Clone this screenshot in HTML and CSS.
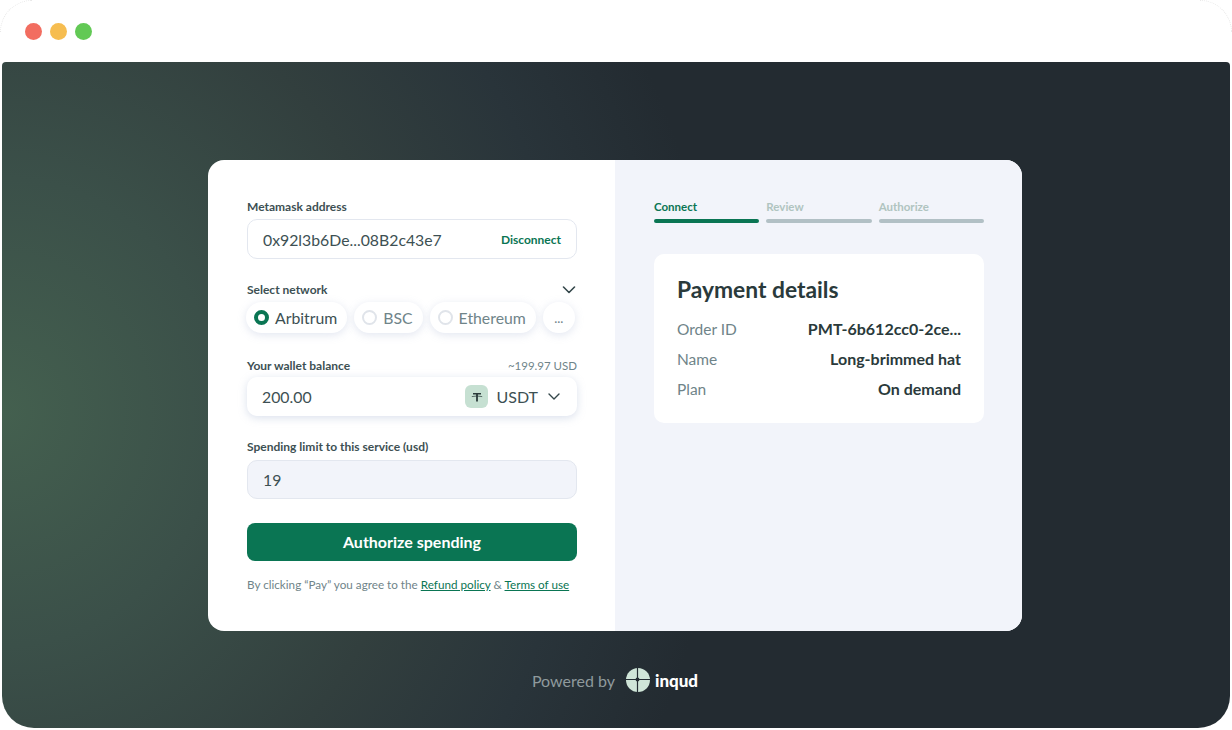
FILE: index.html
```html
<!DOCTYPE html>
<html lang="en">
<head>
    <meta charset="UTF-8">
    <title>Authorize spending</title>
    <link rel="stylesheet" href="styles.css">
</head>
<body>

<div class="titleBar">
    <span class="corner cornerLeft"></span>
    <span class="corner cornerRight"></span>
    <span class="dot dotRed"></span>
    <span class="dot dotYellow"></span>
    <span class="dot dotGreen"></span>
</div>

<div class="stage">
    <div class="card">
        <div class="formSide">
            <div class="fieldLabel">Metamask address</div>
            <div class="inputBox addressBox">
                <span class="inputText">0x92l3b6De...08B2c43e7</span>
                <span class="disconnect">Disconnect</span>
            </div>

            <div class="fieldLabel networkLabel">
                <span>Select network</span>
                <svg class="chevron" width="14" height="8" viewBox="0 0 14 8"><path d="M1.5 1 L7 6.5 L12.5 1" fill="none" stroke="#34474a" stroke-width="1.6" stroke-linecap="round" stroke-linejoin="round"/></svg>
            </div>
            <div class="networks">
                <div class="chip chipActive"><span class="radio radioOn"></span>Arbitrum</div>
                <div class="chip"><span class="radio"></span>BSC</div>
                <div class="chip"><span class="radio"></span>Ethereum</div>
                <div class="chip chipMore">...</div>
            </div>

            <div class="fieldLabel balanceLabel">
                <span>Your wallet balance</span>
                <span class="usdHint">~199.97 USD</span>
            </div>
            <div class="inputBox balanceBox">
                <span class="inputText">200.00</span>
                <div class="tokenPick">
                    <span class="tokenIcon">
                        <svg width="12" height="12" viewBox="0 0 12 12"><path d="M2 2 H10 V3.6 H6.9 V10.5 H5.1 V3.6 H2 Z" fill="#2a3a3a"/><path d="M0.8 5.6 Q6 4.4 11.2 5.6" fill="none" stroke="#2a3a3a" stroke-width="0.7"/></svg>
                    </span>
                    <span class="tokenName">USDT</span>
                    <svg width="12" height="7" viewBox="0 0 12 7"><path d="M1 1 L6 6 L11 1" fill="none" stroke="#34474a" stroke-width="1.4" stroke-linecap="round" stroke-linejoin="round"/></svg>
                </div>
            </div>

            <div class="fieldLabel limitLabel">Spending limit to this service (usd)</div>
            <div class="inputBox limitBox">
                <span class="inputText">19</span>
            </div>

            <button class="payBtn">Authorize spending</button>

            <p class="terms">By clicking “Pay” you agree to the <a href="#">Refund policy</a> &amp; <a href="#">Terms of use</a></p>
        </div>

        <div class="infoSide">
            <div class="steps">
                <div class="step stepActive"><span>Connect</span><i></i></div>
                <div class="step"><span>Review</span><i></i></div>
                <div class="step"><span>Authorize</span><i></i></div>
            </div>
            <div class="details">
                <h2>Payment details</h2>
                <div class="detailRow"><span>Order ID</span><strong>PMT-6b612cc0-2ce...</strong></div>
                <div class="detailRow"><span>Name</span><strong>Long-brimmed hat</strong></div>
                <div class="detailRow"><span>Plan</span><strong>On demand</strong></div>
            </div>
        </div>
    </div>

    <div class="poweredBy">
        <span>Powered by</span>
        <svg width="24" height="24" viewBox="0 0 24 24">
            <circle cx="12" cy="12" r="12" fill="#cfe5d8"/>
            <path d="M11.5 0 V24 M0 11.5 H24" stroke="#232c32" stroke-width="1.2"/>
            <circle cx="11.5" cy="11.5" r="2" fill="#232c32"/>
        </svg>
        <span class="brand">inqud</span>
    </div>
</div>

</body>
</html>
```

FILE: styles.css
```css
* {
    box-sizing: border-box;
}
body {
    font-family: "Lato", "Noto Sans", sans-serif;
    background-color: #fff;
    color: #2a3a3b;
    margin: 0;
    width: 1232px;
    height: 730px;
    overflow: hidden;
    position: relative;
}
.titleBar {
    height: 62px;
    display: flex;
    align-items: center;
    gap: 8px;
    padding: 0 0 0 25px;
}
.corner {
    position: absolute;
    top: 0;
    width: 32px;
    height: 32px;
    border-top: 1px dotted #e8e8e8;
}
.cornerLeft {
    left: 0;
    border-left: 1px dotted #e8e8e8;
    border-top-left-radius: 32px;
}
.cornerRight {
    right: 0;
    border-right: 1px dotted #e8e8e8;
    border-top-right-radius: 32px;
}
.dot {
    width: 17px;
    height: 17px;
    border-radius: 50%;
}
.dotRed { background-color: #f26d60; }
.dotYellow { background-color: #f6bd50; }
.dotGreen { background-color: #62c955; }

.stage {
    margin: 0 2px;
    height: 666px;
    padding: 98px 2px 0 0;
    border-radius: 4px 4px 32px 32px;
    background-color: #232b31;
    background-image: radial-gradient(ellipse 720px 780px at 0px 350px, #44604f 0%, #3b5049 30%, #323f3e 58%, #29343a 80%, #232b31 100%);
    display: flex;
    flex-direction: column;
    align-items: center;
}
.card {
    width: 814px;
    height: 471px;
    display: flex;
    border-radius: 16px;
    overflow: hidden;
    background-color: #fff;
}
.formSide {
    width: 407px;
    padding: 40px 38px 0 39px;
}
.infoSide {
    width: 407px;
    padding: 40px 38px 0 39px;
    background-color: #f2f4fa;
}
.fieldLabel {
    font-size: 12px;
    font-weight: 700;
    line-height: 14px;
    color: #3d5053;
    display: flex;
    justify-content: space-between;
    align-items: center;
}
.inputBox {
    height: 40px;
    margin-top: 5px;
    padding: 0 15px;
    border-radius: 10px;
    display: flex;
    align-items: center;
    justify-content: space-between;
    background-color: #fff;
}
.inputText {
    font-size: 15.8px;
    color: #3d5053;
}
.addressBox {
    border: 1px solid #e3e7ef;
}
.disconnect {
    font-size: 12px;
    font-weight: 700;
    color: #0a7553;
}
.networkLabel {
    margin-top: 24px;
}
.chevron {
    margin-right: 1px;
}
.networks {
    display: flex;
    gap: 7px;
    margin: 5px 0 0 -1px;
}
.chip {
    height: 31px;
    padding: 0 10px 0 8px;
    border-radius: 16px;
    background-color: #fff;
    box-shadow: 0 2px 8px rgba(150, 165, 200, 0.28);
    display: flex;
    align-items: center;
    gap: 6px;
    font-size: 15.8px;
    color: #6f8489;
}
.chipActive {
    color: #3d5053;
}
.chipMore {
    width: 32px;
    padding: 0;
    justify-content: center;
    font-size: 13px;
}
.radio {
    width: 15px;
    height: 15px;
    border-radius: 50%;
    border: 2px solid #e0e4ea;
}
.radioOn {
    border: 4px solid #0a7553;
    background-color: #fff;
}
.balanceLabel {
    margin-top: 26px;
}
.usdHint {
    font-weight: 400;
    font-size: 11.5px;
    color: #6f8489;
}
.balanceBox {
    height: 39px;
    margin-top: 4px;
    box-shadow: 0 2px 8px rgba(150, 165, 200, 0.35);
    padding-right: 17px;
}
.tokenPick {
    display: flex;
    align-items: center;
}
.tokenIcon {
    width: 23px;
    height: 23px;
    border-radius: 6px;
    background-color: #c6e0d2;
    display: flex;
    align-items: center;
    justify-content: center;
    margin-right: 8px;
}
.tokenName {
    font-size: 16px;
    color: #3d5053;
    margin-right: 10px;
}
.limitLabel {
    margin-top: 24px;
}
.limitBox {
    height: 39px;
    margin-top: 6px;
    background-color: #f2f4fa;
    border: 1px solid #e3e7ef;
}
.payBtn {
    display: block;
    width: 100%;
    height: 38px;
    margin-top: 24px;
    padding: 0 0 2px;
    border: none;
    border-radius: 8px;
    background-color: #0a7553;
    color: #fff;
    font-family: inherit;
    font-size: 16px;
    font-weight: 700;
}
.terms {
    margin: 16px 0 0;
    font-size: 11.7px;
    line-height: 15px;
    color: #6f8489;
}
.terms a {
    color: #0a7553;
    text-decoration: underline;
}
.steps {
    display: flex;
    gap: 7px;
}
.step {
    flex: 1;
    font-size: 11.5px;
    font-weight: 700;
    line-height: 14px;
    color: #b0c4c0;
}
.step i {
    display: block;
    height: 4px;
    margin-top: 5px;
    border-radius: 2px;
    background-color: #b2c0c5;
}
.stepActive {
    color: #0a7553;
}
.stepActive i {
    background-color: #0a7553;
}
.details {
    margin-top: 31px;
    height: 169px;
    padding: 21px 23px;
    border-radius: 10px;
    background-color: #fff;
}
.details h2 {
    margin: 0 0 10px;
    font-size: 22.8px;
    line-height: 28px;
    font-weight: 700;
    color: #2a3a3b;
}
.detailRow {
    display: flex;
    justify-content: space-between;
    align-items: center;
    height: 30px;
    font-size: 15.5px;
}
.detailRow span {
    color: #6f8489;
    padding-top: 1px;
}
.detailRow strong {
    color: #2a3a3b;
    font-size: 16px;
    font-weight: 700;
}
.poweredBy {
    display: flex;
    align-items: center;
    margin-top: 37px;
    font-size: 16px;
    color: #8f9a9d;
}
.poweredBy svg {
    margin-left: 11px;
}
.brand {
    margin-left: 5px;
    color: #fff;
    font-size: 17px;
    font-weight: 900;
}
```
